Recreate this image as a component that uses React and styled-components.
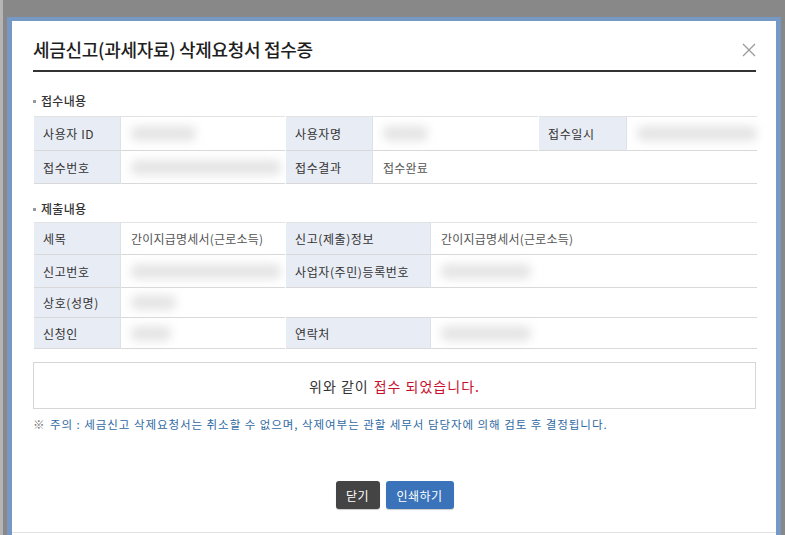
import React from "react";
import styled, { createGlobalStyle } from "styled-components";

const Global = createGlobalStyle`
  html, body { margin: 0; padding: 0; }
  body {
    background: #b5b5b5;
    font-family: "Noto Sans CJK KR", "Noto Sans", sans-serif;
    overflow: hidden;
  }
`;

const Page = styled.div`
  height: 535px;
  box-sizing: border-box;
  background: #888888;
  margin-left: 3px;
  padding: 17px 4px 0 4px;
`;

const Modal = styled.div`
  background: #fff;
  border: 5px solid #7698c4;
  border-top-width: 4px;
  border-bottom: none;
  height: 518px;
  box-sizing: border-box;
  display: flex;
  flex-direction: column;
  padding: 0 20px 0 21px;
  position: relative;
`;

const Header = styled.div`
  display: flex;
  align-items: center;
  justify-content: space-between;
  padding: 16px 0 8px;
  border-bottom: 2px solid #333;
`;

const Title = styled.h1`
  margin: 0;
  font-size: 18px;
  line-height: 25px;
  font-weight: 500;
  color: #1e1e1e;
  letter-spacing: -0.3px;
`;

const Close = styled.button`
  border: none;
  background: none;
  padding: 0;
  width: 14px;
  height: 14px;
  cursor: pointer;
  display: flex;
`;

const SectionTitle = styled.h2`
  margin: ${p => p.$top}px 0 ${p => p.$bottom}px;
  font-size: 12px;
  line-height: 16px;
  font-weight: 500;
  color: #333;
  letter-spacing: 0.3px;
  display: flex;
  align-items: center;
  gap: 5px;
  &::before {
    content: "";
    width: 3px;
    height: 3px;
    background: #999;
  }
`;

const Table = styled.table`
  width: 100%;
  border-collapse: collapse;
  table-layout: fixed;
  font-size: 12px;
  color: #333;
  border-top: 1px solid #e3e3e3;
`;

const Row = styled.tr`
  height: ${p => p.$h}px;
  border-bottom: 1px solid #d9d9d9;
`;

const Th = styled.th`
  background: #e8ecf4;
  font-weight: 400;
  text-align: left;
  padding: 0 0 0 9px;
  border-right: 1px solid #dde2ea;
  border-left: 1px solid #fff;
  color: #333;
  letter-spacing: 0.6px;
  white-space: nowrap;
`;

const Td = styled.td`
  padding: 0 0 0 10px;
  color: #555;
  letter-spacing: 0.2px;
`;

const Blur = styled.span`
  display: block;
  width: ${p => p.$w}px;
  height: 15px;
  background: #dcdcdc;
  filter: blur(5px);
  border-radius: 6px;
  opacity: 0.75;
`;

const Message = styled.div`
  margin-top: 13px;
  height: 47px;
  border: 1px solid #d6d6d6;
  display: flex;
  align-items: center;
  justify-content: center;
  font-size: 14px;
  letter-spacing: 1px;
  color: #333;
  box-sizing: border-box;
`;

const Red = styled.span`
  color: #c8102e;
  margin-left: 5px;
`;

const Note = styled.p`
  margin: 8px 0 0;
  font-size: 11.5px;
  line-height: 14px;
  color: #2f6aa3;
  letter-spacing: 0.95px;
  white-space: nowrap;
`;

const Mark = styled.span`
  color: #777;
  margin-right: 1px;
`;

const Buttons = styled.div`
  display: flex;
  justify-content: center;
  gap: 6px;
  margin-top: 50px;
`;

const Btn = styled.button`
  height: 28px;
  width: ${p => p.$w}px;
  border: none;
  border-radius: 3px;
  background: ${p => p.$bg};
  color: #fff;
  font-family: inherit;
  font-size: 12px;
  letter-spacing: 0.5px;
  padding: 0;
  box-shadow: 0 1px 1px rgba(0,0,0,0.2);
`;

const Footer = styled.div`
  position: absolute;
  left: 0;
  right: 0;
  top: 511px;
  border-top: 1px solid #e2e2e2;
`;

export default function App() {
  return (
    <>
      <Global />
      <Page>
        <Modal>
          <Header>
            <Title>세금신고(과세자료) 삭제요청서 접수증</Title>
            <Close aria-label="close">
              <svg width="14" height="14" viewBox="0 0 14 14">
                <path d="M1 1 L13 13 M13 1 L1 13" stroke="#999" strokeWidth="1.2" />
              </svg>
            </Close>
          </Header>

          <SectionTitle $top={21} $bottom={7}>접수내용</SectionTitle>
          <Table>
            <colgroup>
              <col style={{ width: 87 }} />
              <col style={{ width: 165 }} />
              <col style={{ width: 87 }} />
              <col style={{ width: 166 }} />
              <col style={{ width: 88 }} />
              <col style={{ width: 130 }} />
            </colgroup>
            <tbody>
              <Row $h={34}>
                <Th>사용자 ID</Th>
                <Td><Blur $w={65} /></Td>
                <Th>사용자명</Th>
                <Td><Blur $w={45} /></Td>
                <Th>접수일시</Th>
                <Td><Blur $w={120} /></Td>
              </Row>
              <Row $h={33}>
                <Th>접수번호</Th>
                <Td><Blur $w={150} /></Td>
                <Th>접수결과</Th>
                <Td colSpan={3}>접수완료</Td>
              </Row>
            </tbody>
          </Table>

          <SectionTitle $top={17} $bottom={5}>제출내용</SectionTitle>
          <Table>
            <colgroup>
              <col style={{ width: 87 }} />
              <col style={{ width: 165 }} />
              <col style={{ width: 145 }} />
              <col style={{ width: 326 }} />
            </colgroup>
            <tbody>
              <Row $h={32}>
                <Th>세목</Th>
                <Td>간이지급명세서(근로소득)</Td>
                <Th>신고(제출)정보</Th>
                <Td>간이지급명세서(근로소득)</Td>
              </Row>
              <Row $h={33}>
                <Th>신고번호</Th>
                <Td><Blur $w={150} /></Td>
                <Th>사업자(주민)등록번호</Th>
                <Td><Blur $w={90} /></Td>
              </Row>
              <Row $h={30}>
                <Th>상호(성명)</Th>
                <Td colSpan={3}><Blur $w={45} /></Td>
              </Row>
              <Row $h={31}>
                <Th>신청인</Th>
                <Td><Blur $w={40} /></Td>
                <Th>연락처</Th>
                <Td><Blur $w={90} /></Td>
              </Row>
            </tbody>
          </Table>

          <Message>
            위와 같이<Red>접수 되었습니다.</Red>
          </Message>
          <Note>
            <Mark>※</Mark> 주의 : 세금신고 삭제요청서는 취소할 수 없으며, 삭제여부는 관할 세무서 담당자에 의해 검토 후 결정됩니다.
          </Note>

          <Buttons>
            <Btn $w={44} $bg="#444444">닫기</Btn>
            <Btn $w={68} $bg="#3a73b9">인쇄하기</Btn>
          </Buttons>
          <Footer />
        </Modal>
      </Page>
    </>
  );
}
